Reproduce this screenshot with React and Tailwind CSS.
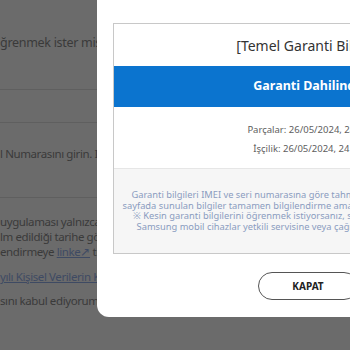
export default function App() {
  return (
    <div className="relative w-[350px] h-[350px] overflow-hidden bg-[#6b6b6b] font-['Noto_Sans',sans-serif]">
      <div className="text-[#3a3a3a]">
        <p className="pt-[33px] h-[89px] text-[12.5px] leading-[20px] tracking-[-0.3px] whitespace-nowrap">ğrenmek ister misiniz?</p>
        <div className="border-t border-[#5f5f5f] h-[33px]"></div>
        <div className="border-t border-[#5f5f5f] pt-[22px] h-[75px]">
          <p className="text-[11.5px] leading-[18px] tracking-[-0.4px] whitespace-nowrap">l Numarasını girin. IMEI numaranızı öğrenmek için</p>
        </div>
        <div className="border-t border-[#5f5f5f] pt-[16px] text-[11.5px] leading-[15px] tracking-[-0.4px]">
          <p className="whitespace-nowrap">uygulaması yalnızca Türkiye'de satılan</p>
          <p className="whitespace-nowrap">lm edildiği tarihe göre hesaplanır</p>
          <p className="whitespace-nowrap">
            endirmeye <span className="underline text-[#3e4a63]">linke↗</span> tıklayın
          </p>
          <p className="mt-[10px] whitespace-nowrap underline text-[#3e4a63]">yılı Kişisel Verilerin Korunması</p>
          <p className="mt-[9px] whitespace-nowrap">sını kabul ediyorum</p>
        </div>
      </div>

      <div className="absolute left-[97px] top-0 w-[422px] h-[317px] bg-white rounded-b-[12px] px-4 pt-[23px]">
        <div className="border border-[#c8c8c8]">
          <div className="h-[42px] flex items-center justify-center">
            <p className="text-[14px] text-[#333] whitespace-nowrap">[Temel Garanti Bilgisi]</p>
          </div>
          <div className="h-[41px] bg-[#0b74cf] flex items-center justify-center">
            <p className="text-[12.5px] font-bold text-white whitespace-nowrap">Garanti Dahilinde</p>
          </div>
          <div className="h-[61px] pt-[3px] flex flex-col items-center justify-center text-[9.5px] leading-[19px] text-[#5e5e5e]">
            <p className="whitespace-nowrap">Parçalar: 26/05/2024, 24 Ay</p>
            <p className="whitespace-nowrap">İşçilik: 26/05/2024, 24 Ay</p>
          </div>
          <div className="bg-[#f6f6f6] border-t border-[#e6e6e6] h-[85px] flex flex-col items-center justify-center text-[9.3px] leading-[10.5px] text-[#8a9cc0] text-center">
            <p className="whitespace-nowrap">Garanti bilgileri IMEI ve seri numarasına göre tahmini olarak gösterilmektedir. Bu</p>
            <p className="whitespace-nowrap">sayfada sunulan bilgiler tamamen bilgilendirme amaçlıdır ve kesinlik taşımamaktadır.</p>
            <p className="whitespace-nowrap">※ Kesin garanti bilgilerini öğrenmek istiyorsanız, satın alma belgeniz ile en yakın</p>
            <p className="whitespace-nowrap">Samsung mobil cihazlar yetkili servisine veya çağrı merkezine başvurabilirsiniz.</p>
          </div>
        </div>
        <div className="mt-[18px] flex justify-center">
          <button className="w-[100px] h-[28px] rounded-full border border-[#555] text-[10px] font-bold text-[#222]">KAPAT</button>
        </div>
      </div>
    </div>
  );
}
